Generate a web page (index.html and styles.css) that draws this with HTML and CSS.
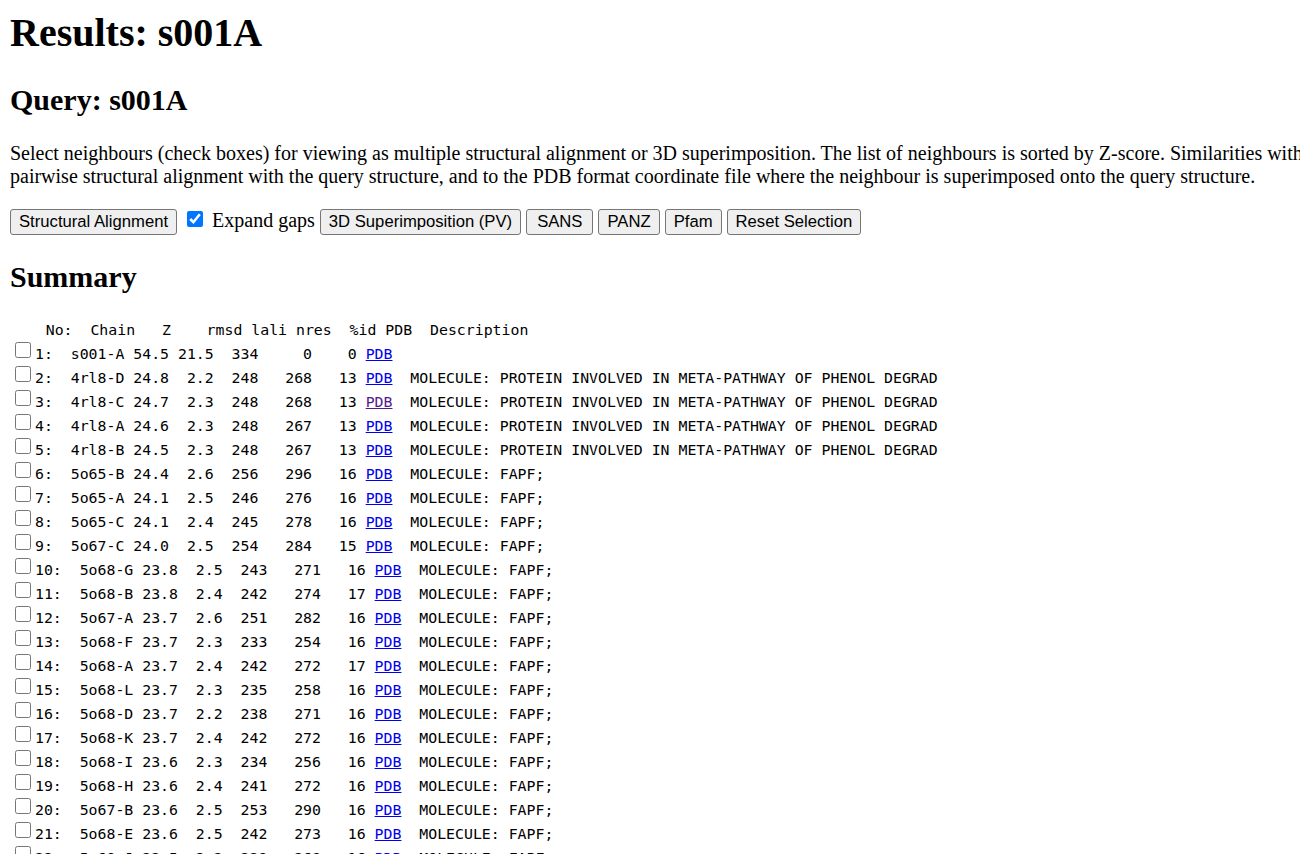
FILE: index.html
```html
<!DOCTYPE html>
<html lang="en">
<head>
<meta charset="utf-8">
<title>Results: s001A</title>
<link rel="stylesheet" href="styles.css">
</head>
<body>
<h1 class="title">Results: s001A</h1>
<h2 class="subtitle">Query: s001A</h2>
<p class="intro">Select neighbours (check boxes) for viewing as multiple structural alignment or 3D superimposition. The list of neighbours is sorted by Z-score. Similarities with a Z-score lower than 2 are spurious. Each neighbour has links to pairwise structural alignment with the query structure, and to the PDB format coordinate file where the neighbour is superimposed onto the query structure.</p>
<form class="controls">
<button type="button" class="btn">Structural Alignment</button> <input type="checkbox" class="tick" checked> Expand gaps <button type="button" class="btn">3D Superimposition (PV)</button> <button type="button" class="btn btn-wide">SANS</button> <button type="button" class="btn">PANZ</button> <button type="button" class="btn">Pfam</button> <button type="button" class="btn">Reset Selection</button>
</form>
<h2 class="subtitle">Summary</h2>
<pre class="summary">    No:  Chain   Z    rmsd lali nres  %id PDB  Description
<input type="checkbox" class="pick">1:  s001-A 54.5 21.5  334     0    0 <a href="#s001-A">PDB</a>
<input type="checkbox" class="pick">2:  4rl8-D 24.8  2.2  248   268   13 <a href="#4rl8-D">PDB</a>  MOLECULE: PROTEIN INVOLVED IN META-PATHWAY OF PHENOL DEGRAD
<input type="checkbox" class="pick">3:  4rl8-C 24.7  2.3  248   268   13 <a href="#4rl8-C" class="visited">PDB</a>  MOLECULE: PROTEIN INVOLVED IN META-PATHWAY OF PHENOL DEGRAD
<input type="checkbox" class="pick">4:  4rl8-A 24.6  2.3  248   267   13 <a href="#4rl8-A">PDB</a>  MOLECULE: PROTEIN INVOLVED IN META-PATHWAY OF PHENOL DEGRAD
<input type="checkbox" class="pick">5:  4rl8-B 24.5  2.3  248   267   13 <a href="#4rl8-B">PDB</a>  MOLECULE: PROTEIN INVOLVED IN META-PATHWAY OF PHENOL DEGRAD
<input type="checkbox" class="pick">6:  5o65-B 24.4  2.6  256   296   16 <a href="#5o65-B">PDB</a>  MOLECULE: FAPF;
<input type="checkbox" class="pick">7:  5o65-A 24.1  2.5  246   276   16 <a href="#5o65-A">PDB</a>  MOLECULE: FAPF;
<input type="checkbox" class="pick">8:  5o65-C 24.1  2.4  245   278   16 <a href="#5o65-C">PDB</a>  MOLECULE: FAPF;
<input type="checkbox" class="pick">9:  5o67-C 24.0  2.5  254   284   15 <a href="#5o67-C">PDB</a>  MOLECULE: FAPF;
<input type="checkbox" class="pick">10:  5o68-G 23.8  2.5  243   271   16 <a href="#5o68-G">PDB</a>  MOLECULE: FAPF;
<input type="checkbox" class="pick">11:  5o68-B 23.8  2.4  242   274   17 <a href="#5o68-B">PDB</a>  MOLECULE: FAPF;
<input type="checkbox" class="pick">12:  5o67-A 23.7  2.6  251   282   16 <a href="#5o67-A">PDB</a>  MOLECULE: FAPF;
<input type="checkbox" class="pick">13:  5o68-F 23.7  2.3  233   254   16 <a href="#5o68-F">PDB</a>  MOLECULE: FAPF;
<input type="checkbox" class="pick">14:  5o68-A 23.7  2.4  242   272   17 <a href="#5o68-A">PDB</a>  MOLECULE: FAPF;
<input type="checkbox" class="pick">15:  5o68-L 23.7  2.3  235   258   16 <a href="#5o68-L">PDB</a>  MOLECULE: FAPF;
<input type="checkbox" class="pick">16:  5o68-D 23.7  2.2  238   271   16 <a href="#5o68-D">PDB</a>  MOLECULE: FAPF;
<input type="checkbox" class="pick">17:  5o68-K 23.7  2.4  242   272   16 <a href="#5o68-K">PDB</a>  MOLECULE: FAPF;
<input type="checkbox" class="pick">18:  5o68-I 23.6  2.3  234   256   16 <a href="#5o68-I">PDB</a>  MOLECULE: FAPF;
<input type="checkbox" class="pick">19:  5o68-H 23.6  2.4  241   272   16 <a href="#5o68-H">PDB</a>  MOLECULE: FAPF;
<input type="checkbox" class="pick">20:  5o67-B 23.6  2.5  253   290   16 <a href="#5o67-B">PDB</a>  MOLECULE: FAPF;
<input type="checkbox" class="pick">21:  5o68-E 23.6  2.5  242   273   16 <a href="#5o68-E">PDB</a>  MOLECULE: FAPF;
<input type="checkbox" class="pick">22:  5o68-J 23.5  2.3  239   268   16 <a href="#5o68-J">PDB</a>  MOLECULE: FAPF;
<input type="checkbox" class="pick">23:  5o68-C 23.5  2.4  240   270   16 <a href="#5o68-C">PDB</a>  MOLECULE: FAPF;
</pre>
</body>
</html>
```
FILE: styles.css
```css
html {
  overflow: hidden;
  background: #ffffff;
}

body {
  margin: 9px 10px 10px 10px;
  font-family: "Liberation Serif", "Times New Roman", serif;
  font-size: 20px;
  color: #000000;
}

.title {
  font-size: 40px;
  font-weight: bold;
  margin: 0 0 26.8px 0;
}

.subtitle {
  font-size: 30px;
  font-weight: bold;
  margin: 24.9px 0;
}

.intro {
  width: 1840px;
  margin: 20px 0;
  line-height: 23px;
}

.controls {
  margin: 0;
  white-space: nowrap;
}

.btn {
  font-family: "Liberation Sans", Arial, sans-serif;
  font-size: 16.67px;
  color: #000000;
  background: #efefef;
  border: 1px solid #767676;
  border-radius: 3px;
  height: 26px;
  padding: 0 8px;
  margin: 0;
  box-sizing: border-box;
  vertical-align: baseline;
}

.btn-wide {
  padding: 0 10px;
}

.tick {
  width: 16px;
  height: 16px;
  margin: 3px 4px 2px 5px;
  vertical-align: baseline;
}

.summary {
  font-family: "DejaVu Sans Mono", monospace;
  font-size: 14.85px;
  line-height: 24px;
  margin: 14px 0;
}

.pick {
  width: 16px;
  height: 16px;
  margin: 0 4px 0 5px;
  vertical-align: 1px;
}

.summary a {
  color: #0000ee;
  text-decoration: underline;
}

.summary a.visited {
  color: #551a8b;
}
```
